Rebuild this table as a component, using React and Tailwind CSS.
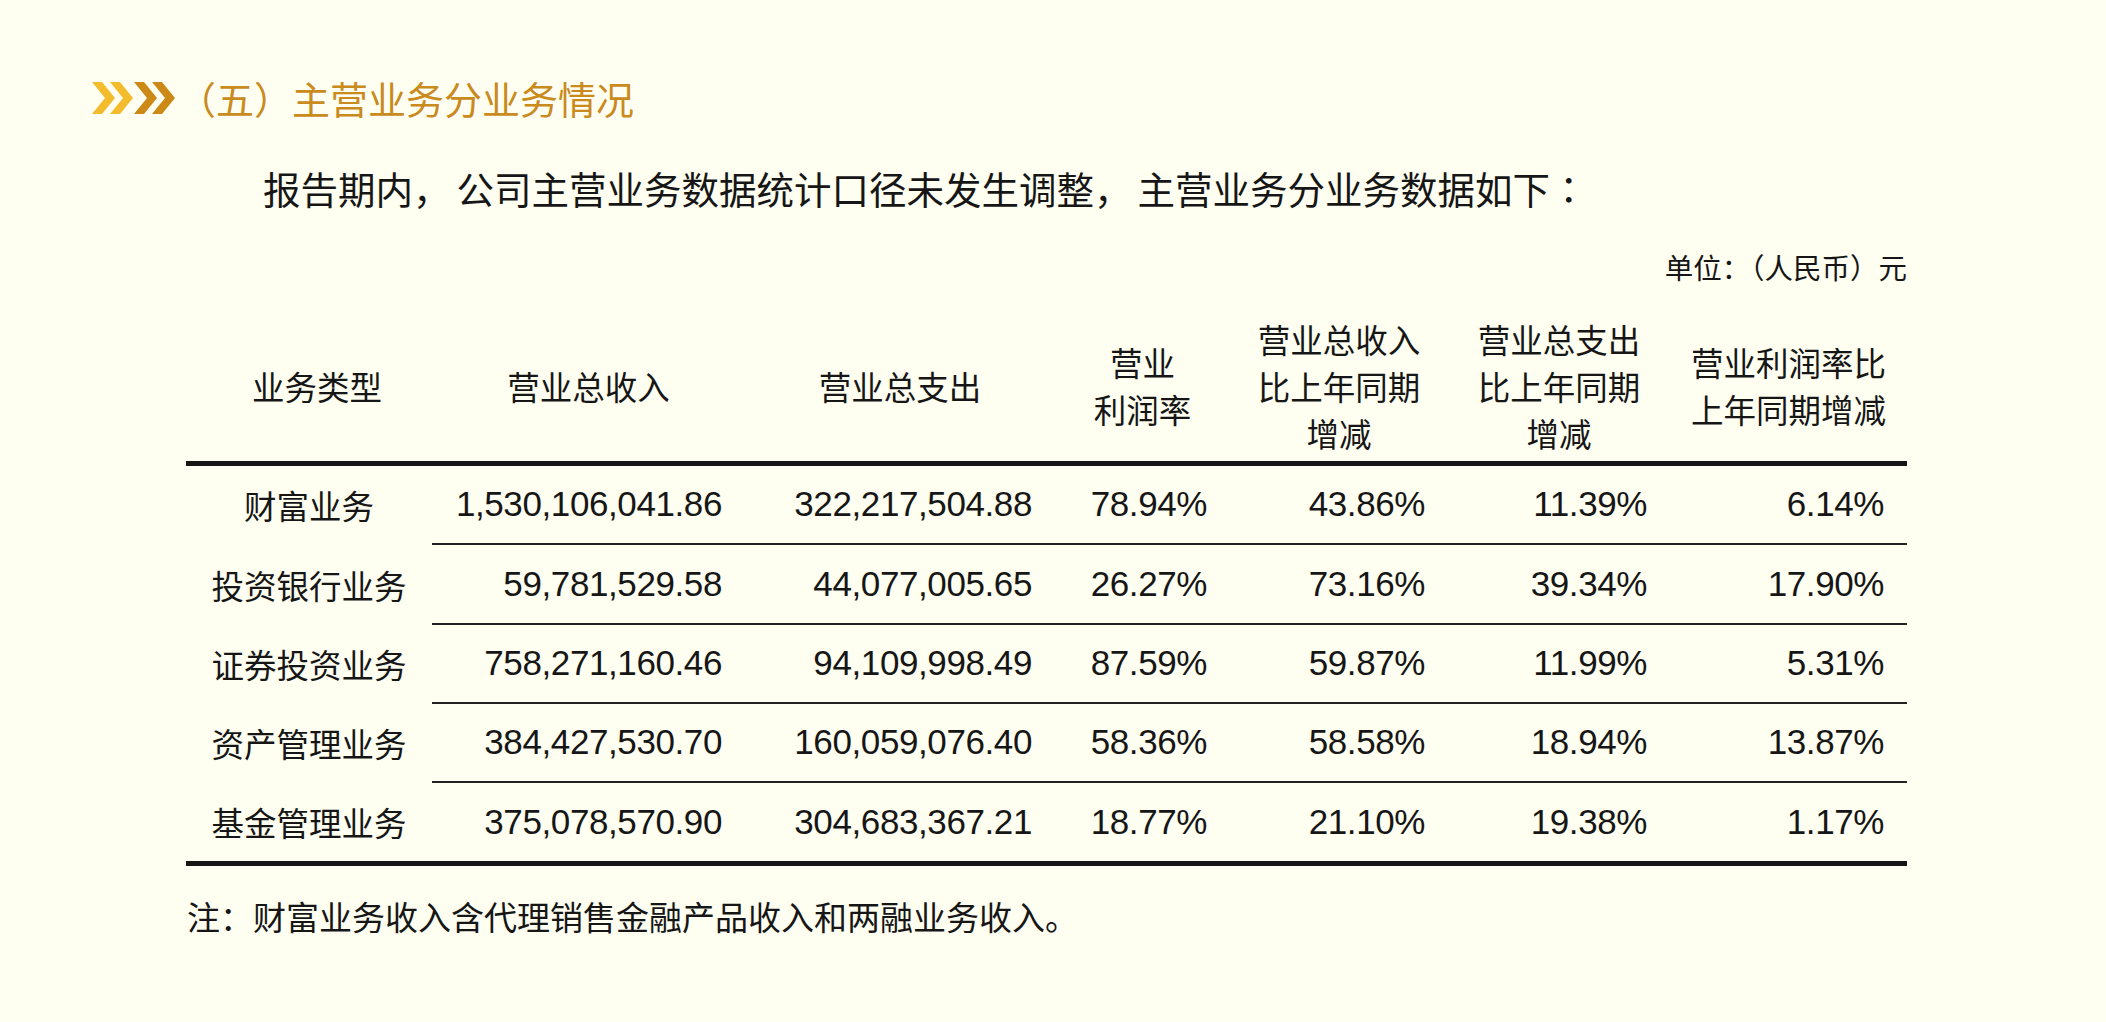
import React from "react";

const grid = "grid grid-cols-[246px_313px_310px_175px_218px_222px_237px]";

const rows = [
  ["财富业务", "1,530,106,041.86", "322,217,504.88", "78.94%", "43.86%", "11.39%", "6.14%"],
  ["投资银行业务", "59,781,529.58", "44,077,005.65", "26.27%", "73.16%", "39.34%", "17.90%"],
  ["证券投资业务", "758,271,160.46", "94,109,998.49", "87.59%", "59.87%", "11.99%", "5.31%"],
  ["资产管理业务", "384,427,530.70", "160,059,076.40", "58.36%", "58.58%", "18.94%", "13.87%"],
  ["基金管理业务", "375,078,570.90", "304,683,367.21", "18.77%", "21.10%", "19.38%", "1.17%"],
];

const rowH = ["h-[79.25px]", "h-[79.25px]", "h-[79.25px]", "h-[79.25px]", "h-[83px]"];

const tc = { fontFamily: '"Noto Sans CJK TC", "Noto Sans CJK SC", sans-serif' };

function Arrows() {
  const light = "#f2bc2c";
  const dark = "#cc8916";
  const chev = (x) => `${x},0 ${x + 10},0 ${x + 23},16 ${x + 10},32 ${x},32 ${x + 13},16`;
  return (
    <svg width="84" height="32" viewBox="0 0 84 32" className="shrink-0">
      <polygon points={chev(0)} fill={light} />
      <polygon points={chev(18)} fill={light} />
      <polygon points={chev(42)} fill={dark} />
      <polygon points={chev(60)} fill={dark} />
    </svg>
  );
}

export default function App() {
  const cjk = { fontFamily: '"Noto Sans CJK SC", "Noto Sans", sans-serif' };
  const num = { fontFamily: '"Liberation Sans", "Noto Sans CJK SC", sans-serif' };
  return (
    <div className="w-[2106px] h-[1022px] bg-[#fefef1] overflow-hidden text-[#161616]" style={cjk}>
      <div className="pt-[74px] pl-[92px]">
        <div className="flex items-center h-[48px]">
          <Arrows />
          <span className="ml-[2px] text-[38px] leading-[48px] text-[#c98a1e] whitespace-nowrap">
            <span style={tc}>（</span>五<span style={tc}>）</span>主营业务分业务情况
          </span>
        </div>
      </div>

      <p className="mt-[42px] ml-[263px] text-[37.5px] leading-[48px] whitespace-nowrap">
        报告期内<span className="mr-[6px]">，</span>公司主营业务数据统计口径未发生调整
        <span className="mr-[6px]">，</span>主营业务分业务数据如下<span style={tc}>：</span>
      </p>

      <div className="mt-[37px] w-[1907px] text-right text-[28.5px] leading-[36px] whitespace-nowrap">
        单位：（人民币）元
      </div>

      <div className="ml-[186px] mt-[24px] w-[1721px]">
        <div className={`${grid} h-[157px] border-b-[5px] border-[#161616] text-[32.5px] leading-[47px] text-center`}>
          <div className="flex items-center justify-center pl-[16px]">业务类型</div>
          <div className="flex items-center justify-center">营业总收入</div>
          <div className="flex items-center justify-center">营业总支出</div>
          <div className="flex items-center justify-center">营业<br />利润率</div>
          <div className="flex items-center justify-center">营业总收入<br />比上年同期<br />增减</div>
          <div className="flex items-center justify-center">营业总支出<br />比上年同期<br />增减</div>
          <div className="flex items-center justify-center">营业利润率比<br />上年同期增减</div>
        </div>

        {rows.map((r, i) => {
          const last = i === rows.length - 1;
          return (
            <div
              key={r[0]}
              className={`${grid} ${rowH[i]} ${last ? "border-b-[5px] border-[#161616]" : ""}`}
            >
              <div className="flex items-center justify-center text-[32.5px]">{r[0]}</div>
              {r.slice(1).map((v, j) => (
                <div
                  key={j}
                  style={num}
                  className={`flex items-center justify-end pr-[23px] text-[35px] tracking-[-0.4px] ${
                    last ? "" : "border-b-2 border-[#222]"
                  }`}
                >
                  {v}
                </div>
              ))}
            </div>
          );
        })}
      </div>

      <p className="mt-[28px] ml-[187px] text-[33px] leading-[44px] whitespace-nowrap">
        注：财富业务收入含代理销售金融产品收入和两融业务收入。
      </p>
    </div>
  );
}
